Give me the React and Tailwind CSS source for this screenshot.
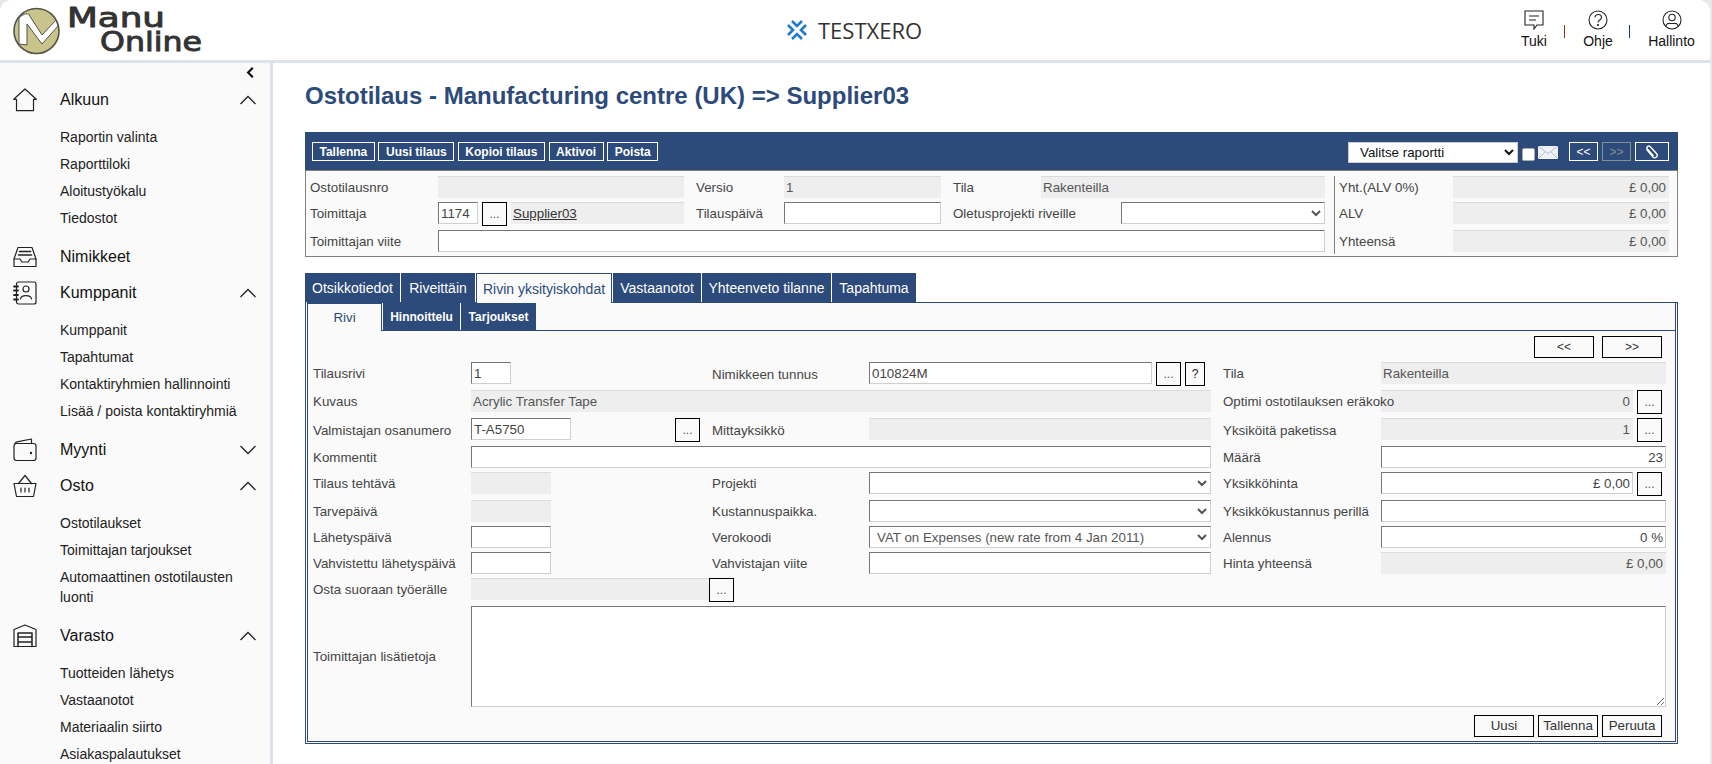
import React from 'react';

// ---- sidebar icons ----
const Ico = ({ children }) => (
  <svg width="24" height="24" viewBox="0 0 24 24" fill="none" stroke="#222" strokeWidth="1.2" strokeLinejoin="round" strokeLinecap="round">
    {children}
  </svg>
);

const HomeIcon = () => (
  <Ico><path d="M12 1 L23.3 11.3 H20.5 V22.7 H3.5 V11.3 H.7 Z" /></Ico>
);
const InboxIcon = () => (
  <Ico>
    <path d="M1 14 L5 2.5 H19 L23 14 V21.5 H1 Z" />
    <path d="M1 14 H7 L9 17 H15 L17 14 H23" />
    <path d="M6.5 6.5 H17.5 M5.5 10 H18.5" strokeWidth="1.6" />
  </Ico>
);
const ContactsIcon = () => (
  <Ico>
    <rect x="3.5" y="1" width="19.5" height="22" rx="2" />
    <circle cx="13" cy="8" r="3" />
    <path d="M7.5 18 C8 13.5 18 13.5 18.5 18" />
    <path d="M1 5.5 H5 M1 9.5 H5 M1 14 H5 M1 18.5 H5" strokeWidth="1.8" />
  </Ico>
);
const WalletIcon = () => (
  <Ico>
    <rect x="1" y="5.5" width="22" height="17" rx="2.5" />
    <path d="M2 6 C2 4.5 3 4 4 3.8 L18.5 1 V5.5" />
    <circle cx="18" cy="15" r=".6" fill="#222" />
  </Ico>
);
const BasketIcon = () => (
  <Ico>
    <path d="M1 9.5 H23 L20.5 22.5 H3.5 Z" />
    <path d="M5.5 9.5 L12 1.5 L18.5 9.5" />
    <path d="M8 14 V18 M12 14 V18 M16 14 V18" />
  </Ico>
);
const WarehouseIcon = () => (
  <Ico>
    <path d="M1 5.5 L12 1 L23 5.5 V22.5 H1 Z" />
    <path d="M5 22.5 V9 H19 V22.5 M5 13 H19 M5 18 H19" strokeWidth="1.5" />
  </Ico>
);

const Chevron = ({ up }) => (
  <svg width="18" height="10" viewBox="0 0 18 10" fill="none" stroke="#222" strokeWidth="1.3">
    <path d={up ? 'M1.5 9 L9 1.5 L16.5 9' : 'M1.5 1 L9 8.5 L16.5 1'} />
  </svg>
);

// ---- sidebar ----
const menu = [
  { title: 'Alkuun', icon: HomeIcon, open: true, items: ['Raportin valinta', 'Raporttiloki', 'Aloitustyökalu', 'Tiedostot'] },
  { title: 'Nimikkeet', icon: InboxIcon },
  { title: 'Kumppanit', icon: ContactsIcon, open: true, items: ['Kumppanit', 'Tapahtumat', 'Kontaktiryhmien hallinnointi', 'Lisää / poista kontaktiryhmiä'] },
  { title: 'Myynti', icon: WalletIcon, open: false },
  { title: 'Osto', icon: BasketIcon, open: true, items: ['Ostotilaukset', 'Toimittajan tarjoukset', 'Automaattinen ostotilausten luonti'] },
  { title: 'Varasto', icon: WarehouseIcon, open: true, items: ['Tuotteiden lähetys', 'Vastaanotot', 'Materiaalin siirto', 'Asiakaspalautukset'] },
];

const Sidebar = () => (
  <aside className="w-[273px] shrink-0 overflow-hidden bg-[#fafafa] border-r-[3px] border-[#dde3ea]">
    <div className="h-[19px] flex items-center justify-end pr-[16px]">
      <svg width="8" height="11" viewBox="0 0 8 11" fill="#111"><path d="M6 0 L7.6 1.6 L3.6 5.5 L7.6 9.4 L6 11 L.6 5.5 Z" /></svg>
    </div>
    {menu.map((m) => {
      const Icon = m.icon;
      return (
        <div key={m.title}>
          <div className="h-9 flex items-center pl-[13px] pr-[13px]">
            <Icon />
            <span className="ml-[23px] flex-1 text-base text-[#111]">{m.title}</span>
            {m.open !== undefined && <Chevron up={m.open} />}
          </div>
          {m.items && (
            <ul className="pt-[5px] pb-[8px] pl-[60px] pr-4 text-sm leading-5 text-[#222]">
              {m.items.map((i) => (
                <li key={i} className="py-[3.5px]">{i}</li>
              ))}
            </ul>
          )}
        </div>
      );
    })}
  </aside>
);

// ---- form parts ----
const Label = ({ children, className = 'leading-[23px]' }) => (
  <div className={`relative z-10 whitespace-nowrap text-[#444] ${className}`}>{children}</div>
);

const inputBorder = 'border border-t-[#767676] border-l-[#767676] border-r-[#cfcfcf] border-b-[#cfcfcf]';

const Input = ({ value = '', right, className = '' }) => (
  <input
    readOnly
    value={value}
    className={`h-[22px] px-[2px] bg-white text-[#444] outline-none min-w-0 ${inputBorder} ${right ? 'text-right' : ''} ${className}`}
  />
);

const Field = ({ children, right, className = '' }) => (
  <div className={`h-[22px] pl-[2px] pr-[3px] leading-[21px] whitespace-nowrap bg-[#eeeeee] border-t border-[#dadada] text-[#555] ${right ? 'text-right' : ''} ${className}`}>
    {children}
  </div>
);

const Select = ({ value, className = '' }) => (
  <select
    defaultValue={value}
    className={`h-[22px] bg-white text-[#555] pl-[3px] outline-none ${inputBorder} ${className}`}
  >
    <option>{value}</option>
  </select>
);

const Dots = ({ className = '' }) => (
  <button className={`w-[25px] h-6 border border-black bg-[#fafafa] text-xs leading-none text-[#555] shrink-0 ${className}`}>...</button>
);

const ToolBtn = ({ children }) => (
  <button className="h-[19px] px-[6.5px] border border-white text-xs font-bold leading-none text-white">{children}</button>
);

const Tab = ({ children, active, w }) => (
  <div
    className={`flex items-center justify-center text-sm ${w} ${
      active ? 'h-[30px] -mb-px bg-[#fafafa] text-[#2c4a7a] border-x border-t border-[#2c4a7a]' : 'h-[29px] bg-[#2c4a7a] text-white'
    }`}
  >
    {children}
  </div>
);

// ---- order header ----
const OrderHeader = () => (
  <div className="flex h-[87px] pt-[5px] pl-[4px] border border-[#808080] bg-[#fafafa] text-[13.33px]">
    <div className="grid grid-cols-[128px_246px_12px_88px_157px_12px_88px_284px] grid-rows-[26px_28px_26px]">
      <Label>Ostotilausnro</Label>
      <Field />
      <div />
      <Label>Versio</Label>
      <Field>1</Field>
      <div />
      <Label>Tila</Label>
      <Field>Rakenteilla</Field>

      <Label>Toimittaja</Label>
      <div className="flex">
        <Input value="1174" className="w-10" />
        <Dots className="ml-1" />
        <Field className="flex-1 ml-1"><span className="underline text-[#333]">Supplier03</span></Field>
      </div>
      <div />
      <Label>Tilauspäivä</Label>
      <Input />
      <div />
      <div className="col-span-2 flex justify-between">
        <Label>Oletusprojekti riveille</Label>
        <Select value="" className="w-[204px]" />
      </div>

      <Label>Toimittajan viite</Label>
      <Input className="col-span-7" />
    </div>
    <div className="ml-[9px] mb-[2px] pl-[4px] border-l border-[#808080] grid grid-cols-[114px_216px] grid-rows-[26px_28px_26px]">
      <Label>Yht.(ALV 0%)</Label>
      <Field right>£ 0,00</Field>
      <Label>ALV</Label>
      <Field right>£ 0,00</Field>
      <Label>Yhteensä</Label>
      <Field right>£ 0,00</Field>
    </div>
  </div>
);

// ---- line detail form ----
const LineForm = () => (
  <div className="pt-[5px] pl-[5px] text-[13.33px]">
    <div className="flex justify-end gap-2 pr-[13px] h-[26px]">
      <button className="w-[60px] h-[22px] border border-black text-xs leading-none text-[#333]">&lt;&lt;</button>
      <button className="w-[60px] h-[22px] border border-black text-xs leading-none text-[#333]">&gt;&gt;</button>
    </div>

    <div className="grid grid-cols-[158px_241px_157px_342px_12px_158px_285px] grid-rows-[28px_28px_28px_26px_28px_26px_26px_26px_28px]">
      <Label>Tilausrivi</Label>
      <Input value="1" className="w-10" />
      <Label className="leading-[25px]">Nimikkeen tunnus</Label>
      <div className="flex">
        <Input value="010824M" className="w-[283px] px-1" />
        <Dots className="ml-[4px]" />
        <button className="ml-1 w-5 h-6 border border-black bg-[#fafafa] text-xs leading-none text-[#222]">?</button>
      </div>
      <div />
      <Label>Tila</Label>
      <Field>Rakenteilla</Field>

      <Label>Kuvaus</Label>
      <Field className="col-span-3">Acrylic Transfer Tape</Field>
      <div />
      <Label>Optimi ostotilauksen eräkoko</Label>
      <div className="flex pr-1 gap-1">
        <Field right className="flex-1">0</Field>
        <Dots />
      </div>

      <Label className="leading-[25px]">Valmistajan osanumero</Label>
      <div className="flex justify-between pr-[12px]">
        <Input value="T-A5750" className="w-[100px] h-5" />
        <Dots />
      </div>
      <Label className="leading-[25px]">Mittayksikkö</Label>
      <Field />
      <div />
      <Label className="leading-[25px]">Yksiköitä paketissa</Label>
      <div className="flex pr-1 gap-1">
        <Field right className="flex-1">1</Field>
        <Dots />
      </div>

      <Label>Kommentit</Label>
      <Input className="col-span-3" />
      <div />
      <Label>Määrä</Label>
      <Input value="23" right />

      <Label>Tilaus tehtävä</Label>
      <Field className="w-20" />
      <Label>Projekti</Label>
      <Select value="" />
      <div />
      <Label>Yksikköhinta</Label>
      <div className="flex pr-1 gap-1">
        <Input value="£ 0,00" right className="flex-1" />
        <Dots />
      </div>

      <Label>Tarvepäivä</Label>
      <Field className="w-20" />
      <Label>Kustannuspaikka.</Label>
      <Select value="" />
      <div />
      <Label>Yksikkökustannus perillä</Label>
      <Input />

      <Label>Lähetyspäivä</Label>
      <Input className="w-20" />
      <Label>Verokoodi</Label>
      <Select value="VAT on Expenses (new rate from 4 Jan 2011)" />
      <div />
      <Label>Alennus</Label>
      <Input value="0 %" right />

      <Label>Vahvistettu lähetyspäivä</Label>
      <Input className="w-20" />
      <Label>Vahvistajan viite</Label>
      <Input />
      <div />
      <Label>Hinta yhteensä</Label>
      <Field right>£ 0,00</Field>

      <Label>Osta suoraan työerälle</Label>
      <div className="flex col-span-2">
        <Field className="w-[238px]" />
        <Dots />
      </div>
    </div>

    <div className="flex items-center">
      <Label className="w-[158px]">Toimittajan lisätietoja</Label>
      <textarea readOnly className={`w-[1195px] h-[101px] bg-white block ${inputBorder}`} />
    </div>

    <div className="flex justify-end gap-1 mt-2 mb-1 pr-[13px]">
      <button className="w-[60px] h-[22px] border border-black leading-none text-[#333]">Uusi</button>
      <button className="w-[60px] h-[22px] border border-black leading-none text-[#333]">Tallenna</button>
      <button className="w-[60px] h-[22px] border border-black leading-none text-[#333]">Peruuta</button>
    </div>
  </div>
);

// ---- page ----
export default function App() {
  return (
    <div className="h-screen overflow-hidden bg-[#e8e8e8] pr-[2px] [font-family:'Liberation_Sans',Arial,sans-serif]">
      <div className="h-full flex flex-col bg-white rounded-t-xl overflow-hidden">
        <header className="h-[63px] shrink-0 flex items-start border-b-[3px] border-[#dde3ea] bg-white relative">
          <svg width="200" height="56" viewBox="0 0 200 56" className="ml-[12px] mt-[6px] shrink-0 overflow-visible">
            <circle cx="24.5" cy="25" r="22.5" fill="#c9c48c" stroke="#55544a" strokeWidth="1.6" />
            <path d="M7 38 V12 C11 8 14 7.5 16.5 8 L30 29 L44 14 L46 20 L30 38 L15 18 V39 Z" fill="#fff" stroke="#55544a" strokeWidth="1" />
            <text x="55" y="21" fill="#333" stroke="#333" strokeWidth=".9" fontFamily="DejaVu Sans" fontSize="26" textLength="98" lengthAdjust="spacingAndGlyphs">Manu</text>
            <text x="88" y="45" fill="#333" stroke="#333" strokeWidth=".9" fontFamily="DejaVu Sans" fontSize="26" textLength="102" lengthAdjust="spacingAndGlyphs">Online</text>
          </svg>

          <div className="absolute left-[787px] top-[19px] flex items-center">
            <svg width="20" height="20" viewBox="0 0 20 20" fill="none" stroke="#1f7bd1" strokeWidth="2.6">
              <path d="M5 1 L10 6 L15 1 M5 19 L10 14 L15 19 M1 5 L6 10 L1 15 M19 5 L14 10 L19 15" />
            </svg>
            <span className="ml-[11px] text-[22px] leading-none text-[#333] [font-family:'Open_Sans',sans-serif]">TESTXERO</span>
          </div>

          <div className="ml-auto flex pt-[10px] pr-[15px] text-sm text-[#111]">
            <div className="flex flex-col items-center w-[28px]">
              <svg width="20" height="20" viewBox="0 0 20 20" fill="none" stroke="#222" strokeWidth="1.1">
                <path d="M1 1 H19 V15 H13 L10 19 V15 H1 Z" />
                <path d="M5 6 H15 M5 10 H12" />
              </svg>
              <span className="mt-[1px]">Tuki</span>
            </div>
            <div className="ml-[16px] mt-[15px] w-px h-[13px] bg-[#8a3a00]" />
            <div className="ml-[18px] flex flex-col items-center w-[30px]">
              <svg width="20" height="20" viewBox="0 0 20 20" fill="none" stroke="#222" strokeWidth="1.1">
                <circle cx="10" cy="10" r="9" />
                <path d="M7 7.5 C7 3.5 13.5 3.5 13.5 7.5 C13.5 10 10 10 10 12.5" />
                <circle cx="10" cy="15" r=".5" fill="#222" />
              </svg>
              <span className="mt-[1px]">Ohje</span>
            </div>
            <div className="ml-[16px] mt-[15px] w-px h-[13px] bg-[#0b3d91]" />
            <div className="ml-[18px] flex flex-col items-center w-[47px]">
              <svg width="20" height="20" viewBox="0 0 20 20" fill="none" stroke="#222" strokeWidth="1.1">
                <circle cx="10" cy="10" r="9" />
                <circle cx="10" cy="7.5" r="3.2" />
                <path d="M4 16.5 C4 12.5 7 13.5 10 13.5 C13 13.5 16 12.5 16 16.5" />
              </svg>
              <span className="mt-[1px]">Hallinto</span>
            </div>
          </div>
        </header>

        <div className="flex flex-1 min-h-0">
          <Sidebar />
          <main className="flex-1 pl-8 pt-5 pr-8 min-w-0">
            <h1 className="text-2xl leading-[26px] font-bold text-[#2c4a7a]">
              Ostotilaus - Manufacturing centre (UK) =&gt; Supplier03
            </h1>

            <div className="mt-[23px] h-[38px] bg-[#2c4a7a] flex items-start pt-[10px] pl-[7px] pr-[9px]">
              <div className="flex gap-[3.7px]">
                <ToolBtn>Tallenna</ToolBtn>
                <ToolBtn>Uusi tilaus</ToolBtn>
                <ToolBtn>Kopioi tilaus</ToolBtn>
                <ToolBtn>Aktivoi</ToolBtn>
                <ToolBtn>Poista</ToolBtn>
              </div>
              <select defaultValue="Valitse raportti" className="ml-auto mr-[1px] h-[21px] w-[170px] pl-[7px] bg-white text-[13.33px] text-[#111] border border-[#ccc]">
                <option>Valitse raportti</option>
              </select>
              <span className="ml-[3px] mt-[6px] w-[13px] h-[13px] bg-white rounded-[2px] border border-[#aaa]" />
              <svg width="20" height="13" viewBox="0 0 20 13" className="ml-[3px] mt-[4px]">
                <rect width="20" height="13" fill="#eef2f7" />
                <path d="M0 0 L10 7.5 L20 0 M0 13 L7 6 M20 13 L13 6" fill="none" stroke="#9fb0c6" strokeWidth=".8" />
              </svg>
              <div className="ml-[11px] flex gap-1">
                <button className="w-[29px] h-[19px] border border-white text-xs leading-none text-white">&lt;&lt;</button>
                <button className="w-[29px] h-[19px] border border-[#8a8f96] text-xs leading-none text-[#8a8f96]">&gt;&gt;</button>
                <button className="w-[34px] h-[19px] border border-white flex items-center justify-center">
                  <svg width="14" height="14" viewBox="0 0 24 24" fill="none" stroke="#fff" strokeWidth="2.4" strokeLinecap="round">
                    <path d="M3 8 L14 21 C18 24 23 19 20 15 L9 3 C7 0 1 3 4 7 L14 18" />
                  </svg>
                </button>
              </div>
            </div>

            <OrderHeader />

            <div className="mt-4 flex gap-px items-end">
              <Tab w="w-[95px]">Otsikkotiedot</Tab>
              <Tab w="w-[74px]">Riveittäin</Tab>
              <Tab w="w-[136px]" active>Rivin yksityiskohdat</Tab>
              <Tab w="w-[88px]">Vastaanotot</Tab>
              <Tab w="w-[129px]">Yhteenveto tilanne</Tab>
              <Tab w="w-[84px]">Tapahtuma</Tab>
            </div>

            <div className="border-[3px] border-t border-double border-[#2c4a7a] bg-[#fafafa]">
              <div className="flex gap-px h-[28px] border-b border-[#2c4a7a] items-start">
                <div className="w-[74px] h-[28px] bg-[#fafafa] border-r border-t border-[#2c4a7a] flex items-center justify-center text-[13.33px] text-[#2c4a7a]">Rivi</div>
                <div className="w-[77px] h-[27px] bg-[#2c4a7a] text-white text-xs font-bold flex items-center justify-center">Hinnoittelu</div>
                <div className="w-[75px] h-[27px] bg-[#2c4a7a] text-white text-xs font-bold flex items-center justify-center">Tarjoukset</div>
              </div>
              <LineForm />
            </div>
          </main>
        </div>
      </div>
    </div>
  );
}
